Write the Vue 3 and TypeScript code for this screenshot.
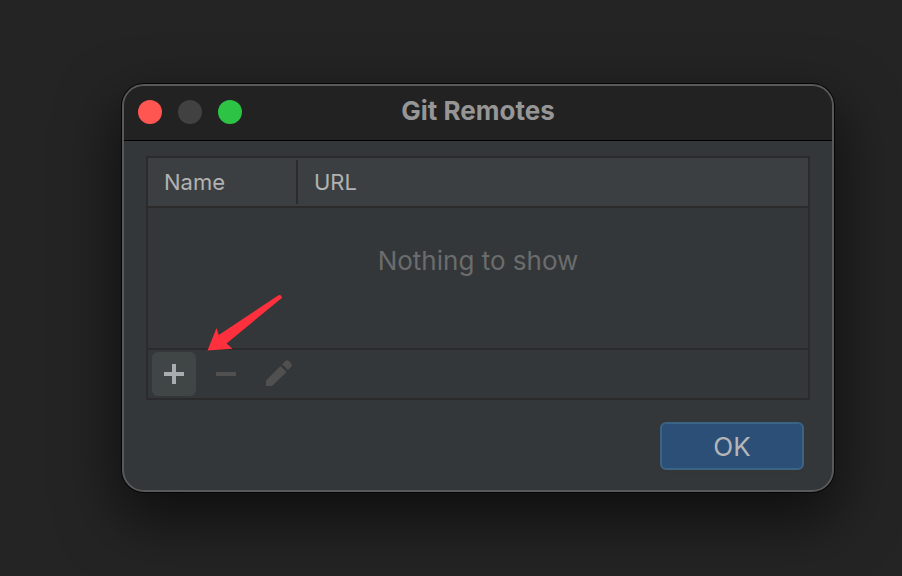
<script setup lang="ts">
import { ref } from 'vue'

interface Remote {
  name: string
  url: string
}

const remotes = ref<Remote[]>([])
</script>

<template>
  <main class="desktop">
    <section class="dialog" role="dialog" aria-labelledby="dialog-title">
      <header class="titlebar">
        <div class="lights">
          <button class="light close" type="button" aria-label="Close"></button>
          <button class="light minimize" type="button" aria-label="Minimize" disabled></button>
          <button class="light expand" type="button" aria-label="Zoom"></button>
        </div>
        <h1 id="dialog-title" class="title">Git Remotes</h1>
      </header>

      <div class="content">
        <div class="panel">
          <table class="remotes">
            <thead>
              <tr>
                <th class="name-col" scope="col"><span class="cell">Name</span></th>
                <th scope="col"><span class="cell">URL</span></th>
              </tr>
            </thead>
            <tbody>
              <tr v-for="remote in remotes" :key="remote.name">
                <td>{{ remote.name }}</td>
                <td>{{ remote.url }}</td>
              </tr>
              <tr v-if="remotes.length === 0">
                <td class="empty" colspan="2">Nothing to show</td>
              </tr>
            </tbody>
          </table>
          <div class="toolbar">
            <button class="tool active" type="button" aria-label="Add">
              <svg viewBox="0 0 44 44"><path d="M20 12h4v8h8v4h-8v8h-4v-8h-8v-4h8z" /></svg>
            </button>
            <button class="tool" type="button" aria-label="Remove" disabled>
              <svg viewBox="0 0 44 44"><path d="M12 20h20v4H12z" /></svg>
            </button>
            <button class="tool" type="button" aria-label="Edit" disabled>
              <svg viewBox="0 0 44 44">
                <path d="M10 28.500 24.500 14 30.500 20 16 34H10z" />
                <path d="M26.200 12.200 29.500 9q1.700-1.500 3.400 0l2.300 2.400q1.500 1.700 0 3.300L32 18z" />
              </svg>
            </button>
          </div>
          <svg class="pointer" viewBox="0 0 80 60" aria-hidden="true">
            <path d="M5.500 56.500 14.500 34 16.800 41 76.500 1.200Q80 0 79.800 4L24.500 49.500 30.500 54.700Z" />
          </svg>
        </div>

        <footer class="actions">
          <button class="ok" type="button">OK</button>
        </footer>
      </div>
    </section>
  </main>
</template>

<style>
body {
  background: #242424;
}
</style>

<style scoped>
.desktop {
  box-sizing: border-box;
  min-height: 100vh;
  padding: 84px 68px 84px 122px;
  overflow: hidden;
  background: #242424;
  font-family: Inter, "Liberation Sans", sans-serif;
  color: #b1b2b3;
}

.dialog {
  border: 2px solid #58595a;
  border-radius: 22px;
  background: #333739;
  box-shadow: 0 0 0 1px #050505, 0 24px 60px 4px rgba(0, 0, 0, 0.6);
}

.titlebar {
  display: grid;
  grid-template-columns: 1fr auto 1fr;
  align-items: center;
  height: 52px;
  padding: 0 14px 2px;
  border-bottom: 1px solid #000;
  border-radius: 20px 20px 0 0;
  background: #222;
}

.lights {
  display: flex;
  gap: 16px;
}

.light {
  width: 24px;
  height: 24px;
  padding: 0;
  border: 0;
  border-radius: 50%;
}

.close {
  background: #ff5651;
}

.minimize {
  background: #414141;
}

.expand {
  background: #2dc445;
}

.title {
  margin: 0;
  padding-bottom: 2px;
  font-size: 26px;
  font-weight: 700;
  line-height: 32px;
  color: #969696;
}

.content {
  padding: 15px 22px 20px;
}

.panel {
  position: relative;
  border: 2px solid #2b2b2b;
}

.remotes {
  width: 100%;
  border-collapse: separate;
  border-spacing: 0;
  table-layout: fixed;
}

.remotes th {
  height: 48px;
  padding: 0;
  border-bottom: 2px solid #2b2b2b;
  background: #3c3f41;
  font-size: 22px;
  font-weight: 400;
  line-height: 44px;
  text-align: left;
}

.remotes .name-col {
  width: 150px;
}

.cell {
  display: block;
  padding-left: 16px;
}

.name-col .cell {
  border-right: 2px solid #2b2b2b;
}

.remotes .empty {
  height: 106px;
  padding: 0 0 34px;
  font-size: 26px;
  line-height: 32px;
  text-align: center;
  color: #6b6c6c;
}

.toolbar {
  display: flex;
  gap: 8px;
  padding: 2px 4px;
  border-top: 2px solid #2b2b2b;
}

.tool {
  width: 44px;
  height: 44px;
  padding: 0;
  border: 0;
  border-radius: 6px;
  background: transparent;
  color: #505050;
}

.tool.active {
  background: #404645;
  color: #a9adb0;
}

.tool svg {
  display: block;
  fill: currentColor;
}

.pointer {
  position: absolute;
  left: 54px;
  bottom: 44px;
  width: 80px;
  height: 60px;
  fill: #ff303d;
}

.actions {
  display: flex;
  justify-content: flex-end;
  padding: 22px 6px 0;
}

.ok {
  width: 144px;
  height: 48px;
  padding: 0;
  border: 2px solid #3b6384;
  border-radius: 6px;
  background: #2b4f77;
  box-shadow: 0 2px 2px #353535;
  font: inherit;
  font-size: 26px;
  color: #b5b6b7;
}
</style>
